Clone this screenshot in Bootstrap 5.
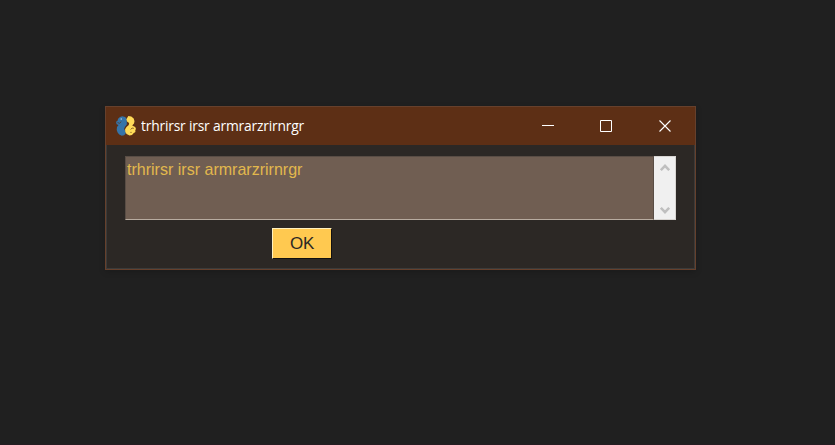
<!DOCTYPE html>
<html lang="en">
<head>
<meta charset="utf-8">
<meta name="viewport" content="width=device-width, initial-scale=1">
<title>trhrirsr irsr armrarzrirnrgr</title>
<link href="https://cdn.jsdelivr.net/npm/bootstrap@5.3.0/dist/css/bootstrap.min.css" rel="stylesheet">
<style>
body{background:#202020;height:445px;padding:106px 0 0 105px;border-bottom:1px solid #261c22}
.win{width:591px;height:164px;background:#2c2825;border:1px solid #66402c;box-shadow:inset 0 0 0 1px #3b3b3a,0 2px 6px rgba(0,0,0,.18)}
.titlebar{height:38px;background:#5d2f15;color:#fff;padding-left:10px}
.caption{font:14.5px/20px "Open Sans","Noto Sans",sans-serif;margin:0 0 0 5px;width:164px}
.caption span,.msg span{display:inline-block;transform-origin:0 50%;white-space:nowrap}
.caption span{letter-spacing:-.2px;transform:scaleX(.953)}
.msg span{transform:scaleX(.943)}
.winbtn{width:58px;height:38px;background:none;color:#fff}
.winbtn:last-child{width:60px}
.client{padding:11px 18px 0 19px}
.output{height:64px}
.msg{background:#705e52;border:1px solid #594d45;border-bottom:1px solid #b8aca0;color:#e2b84d;font:17px/20px "Liberation Sans",Arial,sans-serif;padding:3px 0 0 1px}
.scroller{width:22px;height:64px;margin-right:1px;background:#f0f0f0;border:1px solid #d8d5d2;border-width:1px 1px 1px 0;padding:6px 0 4px}
.ok{width:60px;height:31px;margin:8px 0 0 147px;background:#ffc950;color:#2c2825;border:1px solid;border-color:#fff0bd #11100f #11100f #fff0bd;font:17px/30px "Liberation Sans",Arial,sans-serif;letter-spacing:-.4px}
</style>
</head>
<body>
<main class="win d-flex flex-column">
  <header class="titlebar d-flex align-items-center flex-shrink-0">
    <svg width="20" height="20" viewBox="0 0 20 20" aria-hidden="true">
      <path fill="#3674a8" d="M4 .9 6.2.2 9.2 1l1.6 2.2v5.2L9 10.8l-1 2.1 1.6 2.2.1 2.4-1.6 1.8-2.3.5-2.6-1.3-1.6-2-.9-2.5.3-2.9 1.5-2.1L.6 8.3 0 5.8l1.4-.9.7-2.2z"/>
      <path fill="#ffdb58" d="m12.3 0 3 .6 2.4 1.9.8 2.7-.5 2.4-1.8 2 3 1.3.8 2-.7 1.1.1 2.1-1.9 1.2-1.5 1.8-2.5.4-2.9-1.4-1.3-2.1-.2-2.8 1.4-2.1 2.3-2.1.3-2-2.1-1.4-.6-2.3z"/>
      <path fill="none" stroke="#5d2f15" stroke-width=".7" d="m1.5 6.5 2 .8 1.8-1.7M17.8 12.4l-1.7-.4-1.4 1.5"/>
      <circle cx="5.2" cy="3" r=".65" fill="#d7e4eb"/><circle cx="15" cy="16.3" r=".6" fill="#765122"/>
    </svg>
    <div class="caption"><span>trhrirsr irsr armrarzrirnrgr</span></div>
    <div class="d-flex ms-auto">
      <button class="winbtn border-0 p-0 d-flex align-items-center justify-content-center" aria-label="Minimize"><svg width="12" height="12"><path d="M0 5.5h12" stroke="currentColor"/></svg></button>
      <button class="winbtn border-0 p-0 d-flex align-items-center justify-content-center" aria-label="Maximize"><svg width="12" height="12"><path d="M.5.5h11v11H.5z" fill="none" stroke="currentColor"/></svg></button>
      <button class="winbtn border-0 p-0 d-flex align-items-center justify-content-center" aria-label="Close"><svg width="12" height="12"><path d="m.5.5 11 11m0-11-11 11" stroke="currentColor" stroke-width="1.1"/></svg></button>
    </div>
  </header>
  <section class="client">
    <div class="output d-flex">
      <div class="msg flex-grow-1"><span>trhrirsr irsr armrarzrirnrgr</span></div>
      <div class="scroller d-flex flex-column justify-content-between align-items-center">
        <svg width="10" height="9" fill="none" stroke="#bfbfbf" stroke-width="2.6"><path d="M.8 7.2 5 2.8l4.2 4.4"/></svg>
        <svg width="10" height="9" fill="none" stroke="#bfbfbf" stroke-width="2.6"><path d="M.8 1.8 5 6.2l4.2-4.4"/></svg>
      </div>
    </div>
    <button class="ok d-block p-0 text-center">OK</button>
  </section>
</main>
<script src="https://cdn.jsdelivr.net/npm/bootstrap@5.3.0/dist/js/bootstrap.bundle.min.js"></script>
</body>
</html>
